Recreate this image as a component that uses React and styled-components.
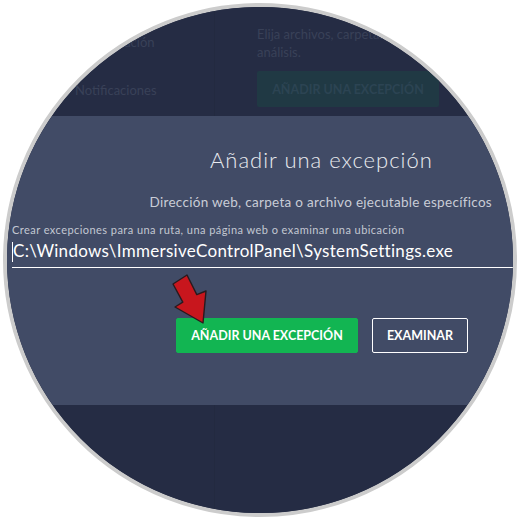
import React from 'react';
import styled, { createGlobalStyle } from 'styled-components';

const GlobalStyle = createGlobalStyle`
	html, body {
		margin: 0;
		padding: 0;
		background: #ffffff;
	}
	body {
		font-family: Lato, "Open Sans", Arial, sans-serif;
	}
`;

function Arrow() {
	return (
		<ArrowSvg viewBox="160 265 60 70" width="60" height="70">
			<polygon
				points="187,275 173,284 182.8,302.2 175,307 203,323 206,291 196.8,294.6"
				fill="#c8161d"
				stroke="#2a1a1e"
				strokeWidth="1.4"
				strokeLinejoin="round"
			/>
		</ArrowSvg>
	);
}

function App() {
	return (
		<>
			<GlobalStyle />
			<Page>
				<Circle>
					<Screen>
						<Section>
							<LeftCol>
								<DimText top={26}>Configuración</DimText>
								<DimText top={30}>Notificaciones</DimText>
							</LeftCol>
							<RightCol>
								<DimText top={18}>
									Elija archivos, carpetas o URL que desea excluir del
									<br />
									análisis.
								</DimText>
								<GhostButton>AÑADIR UNA EXCEPCIÓN</GhostButton>
							</RightCol>
						</Section>

						<Dialog>
							<Title>Añadir una excepción</Title>
							<Subtitle>Dirección web, carpeta o archivo ejecutable específicos</Subtitle>
							<Label>Crear excepciones para una ruta, una página web o examinar una ubicación</Label>
							<PathInput>
								<Caret />
								C:\Windows\ImmersiveControlPanel\SystemSettings.exe
							</PathInput>
							<Actions>
								<Button primary>AÑADIR UNA EXCEPCIÓN</Button>
								<Button>EXAMINAR</Button>
							</Actions>
						</Dialog>

						<Section grow>
							<LeftCol />
							<RightCol />
						</Section>

						<Arrow />
					</Screen>
				</Circle>
			</Page>
		</>
	);
}

export default App;

const Page = styled.div`
	width: 520px;
	height: 520px;
	padding: 3px;
	box-sizing: border-box;
`;

const Circle = styled.div`
	width: 514px;
	height: 514px;
	box-sizing: border-box;
	border: 4px solid #cccccc;
	border-radius: 50%;
	overflow: hidden;
	background: #252c44;
`;

const Screen = styled.div`
	position: relative;
	height: 100%;
	display: flex;
	flex-direction: column;
`;

const Section = styled.div`
	display: flex;
	height: ${p => (p.grow ? 'auto' : '109px')};
	flex: ${p => (p.grow ? '1' : 'none')};
	background: #252c44;
`;

const LeftCol = styled.div`
	flex: none;
	width: 208px;
	padding-left: 68px;
	box-sizing: border-box;
	border-right: 1px solid #232a40;
`;

const RightCol = styled.div`
	flex: 1;
	min-width: 0;
	overflow: hidden;
	padding-left: 42px;
`;

const DimText = styled.div`
	margin-top: ${p => p.top}px;
	color: #394158;
	font-size: 13px;
	line-height: 18px;
	white-space: nowrap;
`;

const GhostButton = styled.div`
	margin-top: 10px;
	width: 182px;
	height: 36px;
	display: flex;
	align-items: center;
	justify-content: center;
	background: #203944;
	color: #2c4453;
	font-size: 12.5px;
	font-weight: 700;
	border-radius: 2px;
`;

const Dialog = styled.div`
	height: 289px;
	background: #414b66;
	padding: 31px 0 0 5px;
	box-sizing: border-box;
	display: flex;
	flex-direction: column;
`;

const Title = styled.div`
	padding-left: 198px;
	color: #e9ebf0;
	font-size: 22px;
	font-weight: 300;
	letter-spacing: 1px;
	line-height: 26px;
`;

const Subtitle = styled.div`
	margin-top: 20px;
	padding-right: 21px;
	text-align: right;
	color: #c9cdd7;
	font-size: 13.5px;
	letter-spacing: 0.3px;
	line-height: 18px;
`;

const Label = styled.div`
	margin-top: 12px;
	color: #c3c8d2;
	font-size: 11px;
	letter-spacing: 0.45px;
	line-height: 14px;
	white-space: nowrap;
`;

const PathInput = styled.div`
	position: relative;
	margin-top: 3px;
	margin-right: -10px;
	padding: 0 0 5px 1px;
	border-bottom: 1px solid #ffffff;
	color: #ffffff;
	font-size: 17px;
	letter-spacing: 0.3px;
	line-height: 22px;
	white-space: nowrap;
`;

const Caret = styled.span`
	position: absolute;
	left: 0;
	top: 2px;
	width: 1px;
	height: 20px;
	background: #ffffff;
`;

const Actions = styled.div`
	display: flex;
	gap: 14px;
	margin-top: 50px;
	padding-left: 164px;
`;

const Button = styled.div`
	width: ${p => (p.primary ? '182px' : '96px')};
	height: 35px;
	box-sizing: border-box;
	display: flex;
	align-items: center;
	justify-content: center;
	background: ${p => (p.primary ? '#12b552' : 'transparent')};
	border: 1px solid ${p => (p.primary ? '#12b552' : '#ffffff')};
	border-radius: 2px;
	color: #ffffff;
	font-size: 12.5px;
	font-weight: 700;
	white-space: nowrap;
`;

const ArrowSvg = styled.svg`
	position: absolute;
	left: 153px;
	top: 258px;
`;
